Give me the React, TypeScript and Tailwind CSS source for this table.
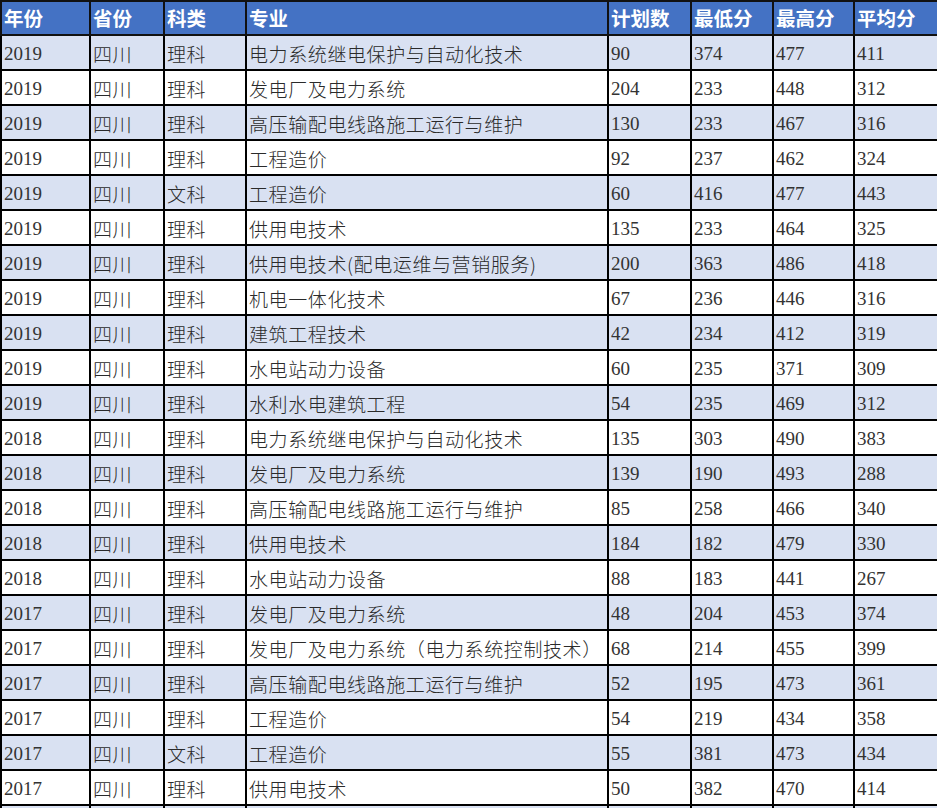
const headers = ["年份", "省份", "科类", "专业", "计划数", "最低分", "最高分", "平均分"];

const rows: string[][] = [
  ["2019", "四川", "理科", "电力系统继电保护与自动化技术", "90", "374", "477", "411"],
  ["2019", "四川", "理科", "发电厂及电力系统", "204", "233", "448", "312"],
  ["2019", "四川", "理科", "高压输配电线路施工运行与维护", "130", "233", "467", "316"],
  ["2019", "四川", "理科", "工程造价", "92", "237", "462", "324"],
  ["2019", "四川", "文科", "工程造价", "60", "416", "477", "443"],
  ["2019", "四川", "理科", "供用电技术", "135", "233", "464", "325"],
  ["2019", "四川", "理科", "供用电技术(配电运维与营销服务)", "200", "363", "486", "418"],
  ["2019", "四川", "理科", "机电一体化技术", "67", "236", "446", "316"],
  ["2019", "四川", "理科", "建筑工程技术", "42", "234", "412", "319"],
  ["2019", "四川", "理科", "水电站动力设备", "60", "235", "371", "309"],
  ["2019", "四川", "理科", "水利水电建筑工程", "54", "235", "469", "312"],
  ["2018", "四川", "理科", "电力系统继电保护与自动化技术", "135", "303", "490", "383"],
  ["2018", "四川", "理科", "发电厂及电力系统", "139", "190", "493", "288"],
  ["2018", "四川", "理科", "高压输配电线路施工运行与维护", "85", "258", "466", "340"],
  ["2018", "四川", "理科", "供用电技术", "184", "182", "479", "330"],
  ["2018", "四川", "理科", "水电站动力设备", "88", "183", "441", "267"],
  ["2017", "四川", "理科", "发电厂及电力系统", "48", "204", "453", "374"],
  ["2017", "四川", "理科", "发电厂及电力系统（电力系统控制技术）", "68", "214", "455", "399"],
  ["2017", "四川", "理科", "高压输配电线路施工运行与维护", "52", "195", "473", "361"],
  ["2017", "四川", "理科", "工程造价", "54", "219", "434", "358"],
  ["2017", "四川", "文科", "工程造价", "55", "381", "473", "434"],
  ["2017", "四川", "理科", "供用电技术", "50", "382", "470", "414"],
];

const widths = ["w-[89px]", "w-[74px]", "w-[82px]", "w-[362px]", "w-[83px]", "w-[82px]", "w-[81px]", "w-[84px]"];

export default function App() {
  return (
    <div className="w-[937px] h-[808px] overflow-hidden bg-white">
      <table className="w-[937px] table-fixed border-collapse border-2 border-black font-['Liberation_Serif','Noto_Sans_CJK_SC',serif] text-[19px] text-[#333]">
        <colgroup>
          {widths.map((w, i) => (
            <col key={i} className={w} />
          ))}
        </colgroup>
        <thead>
          <tr className="h-[34px] bg-[#4472c4]">
            {headers.map((h) => (
              <th
                key={h}
                className="border-2 border-[#111] px-[2px] pb-[1px] text-left align-middle font-['Noto_Sans_CJK_SC',sans-serif] text-[19.5px] font-bold leading-none text-white"
              >
                {h}
              </th>
            ))}
          </tr>
        </thead>
        <tbody>
          {rows.map((r, i) => (
            <tr key={i} className={i % 2 === 0 ? "h-[35px] bg-[#d9e1f2]" : "h-[35px] bg-white"}>
              {r.map((c, j) => (
                <td
                  key={j}
                  className={
                    j === 0 || j >= 4
                      ? "border-2 border-black px-[2px] pt-[1px] align-middle leading-none whitespace-nowrap"
                      : "border-2 border-black px-[2px] pt-[1px] align-middle font-['Noto_Sans_CJK_SC',sans-serif] font-light leading-none tracking-[0.6px] whitespace-nowrap text-[#2a2a2a]"
                  }
                >
                  {c}
                </td>
              ))}
            </tr>
          ))}
          <tr className="h-[35px] bg-[#d9e1f2]">
            {headers.map((h) => (
              <td key={h} className="border-2 border-black" />
            ))}
          </tr>
        </tbody>
      </table>
    </div>
  );
}
